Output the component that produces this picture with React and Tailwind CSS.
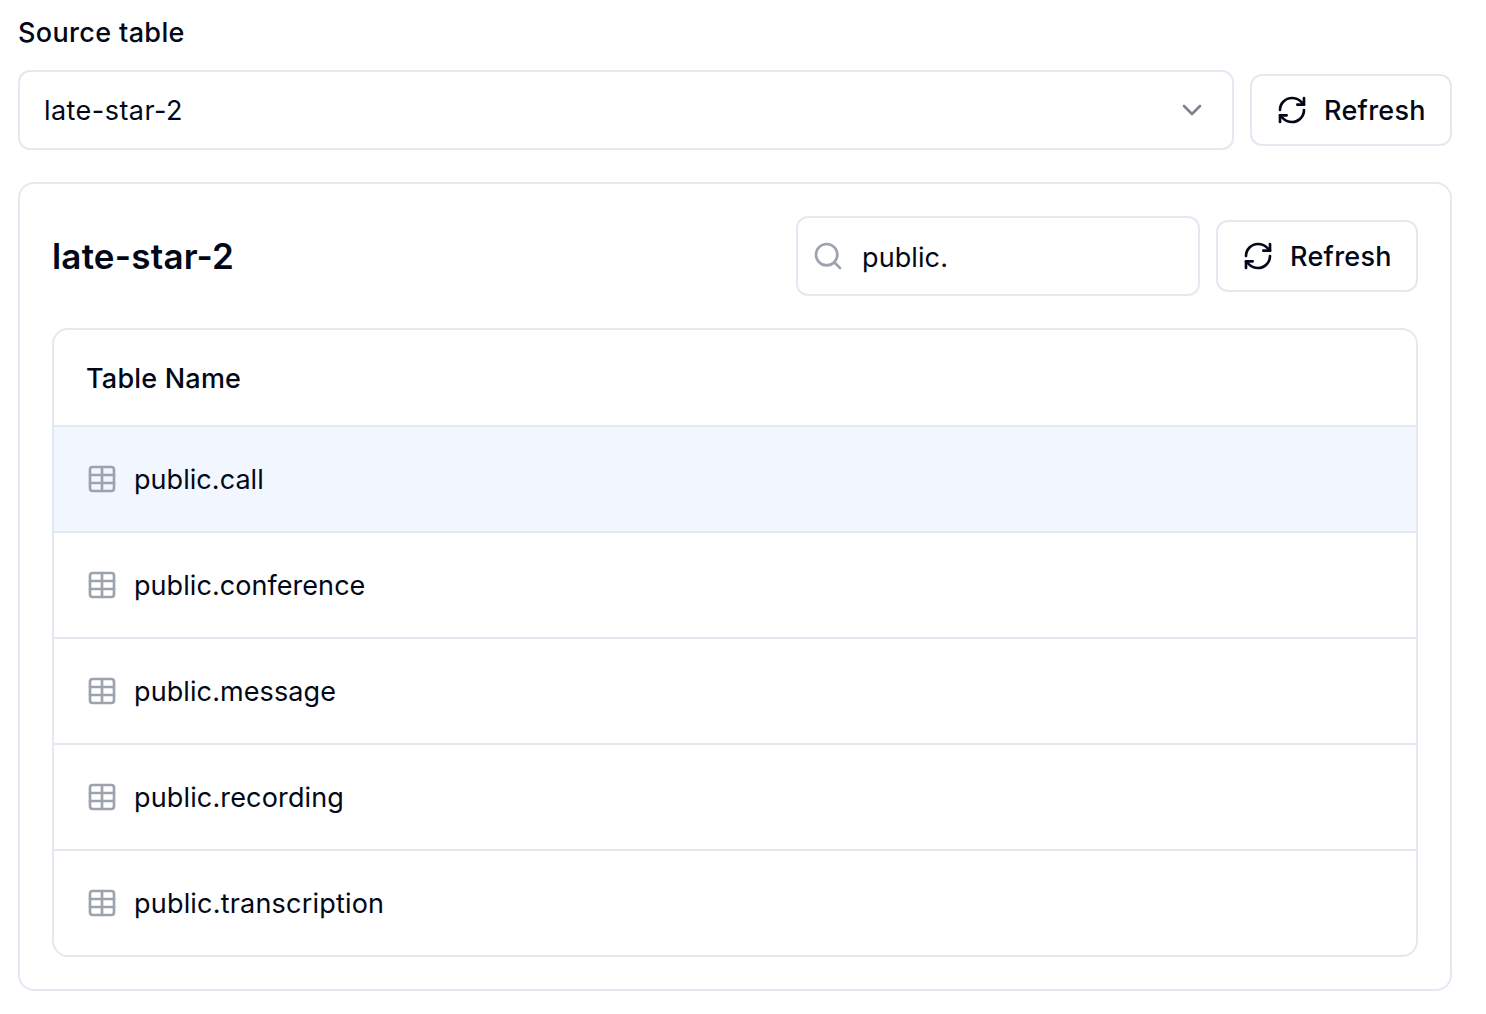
import { RefreshCw, ChevronDown, Search, Table } from "lucide-react";

const tables = [
  { name: "public.call", tracking: "tracking-[0.05px]" },
  { name: "public.conference", tracking: "tracking-[0.06px]" },
  { name: "public.message", tracking: "tracking-[0.1px]" },
  { name: "public.recording", tracking: "tracking-[0.15px]" },
  { name: "public.transcription", tracking: "tracking-[0.2px]" },
];

function RefreshButton() {
  return (
    <button className="flex h-[72px] w-[202px] shrink-0 items-center gap-4 rounded-xl border-2 border-[#e4e8f1] bg-white pl-6 text-[27px] font-medium leading-10 tracking-[0.3px]">
      <RefreshCw size={32} className="shrink-0" />
      <span className="pt-0.5">Refresh</span>
    </button>
  );
}

export default function App() {
  return (
    <main className="h-[1014px] w-[1486px] overflow-hidden bg-white pl-[18px] pr-[34px] pt-[13px] font-['Inter',sans-serif] text-[27px] text-[#020817]">
      <div className="h-[57px] font-medium leading-10 tracking-[0.35px]">Source table</div>
      <div className="flex items-center gap-4">
        <div className="flex h-20 grow items-center justify-between rounded-xl border-2 border-[#e4e8f1] px-6">
          <span className="pt-0.5 tracking-[0.45px]">late-star-2</span>
          <ChevronDown size={32} className="text-[#80838b]" />
        </div>
        <RefreshButton />
      </div>
      <section className="mt-8 h-[809px] rounded-2xl border-2 border-[#e4e8f1] px-8 pt-8">
        <div className="flex items-center gap-4">
          <h2 className="grow text-[35px] font-semibold leading-[56px] tracking-[0.2px]">late-star-2</h2>
          <div className="flex h-20 w-[404px] items-center rounded-xl border-2 border-[#e4e8f1] pl-3.5">
            <Search size={32} className="mr-[18px] text-[#9ca3af]" />
            <span className="pt-1 tracking-[0.1px]">public.</span>
          </div>
          <RefreshButton />
        </div>
        <div className="mt-8 overflow-hidden rounded-2xl border-2 border-[#e4e8f1]">
          <div className="flex h-[95px] items-center px-8 pt-[3px] font-medium tracking-[0.2px]">Table Name</div>
          {tables.map(({ name, tracking }, i) => (
            <div
              key={name}
              className={`flex h-[106px] items-center gap-4 border-t-2 border-[#e4e8f1] px-8 ${i === 0 ? "bg-[#f1f6ff]" : ""}`}
            >
              <Table size={32} className="text-[#9ca3af]" />
              <span className={`pt-0.5 ${tracking}`}>{name}</span>
            </div>
          ))}
        </div>
      </section>
    </main>
  );
}
